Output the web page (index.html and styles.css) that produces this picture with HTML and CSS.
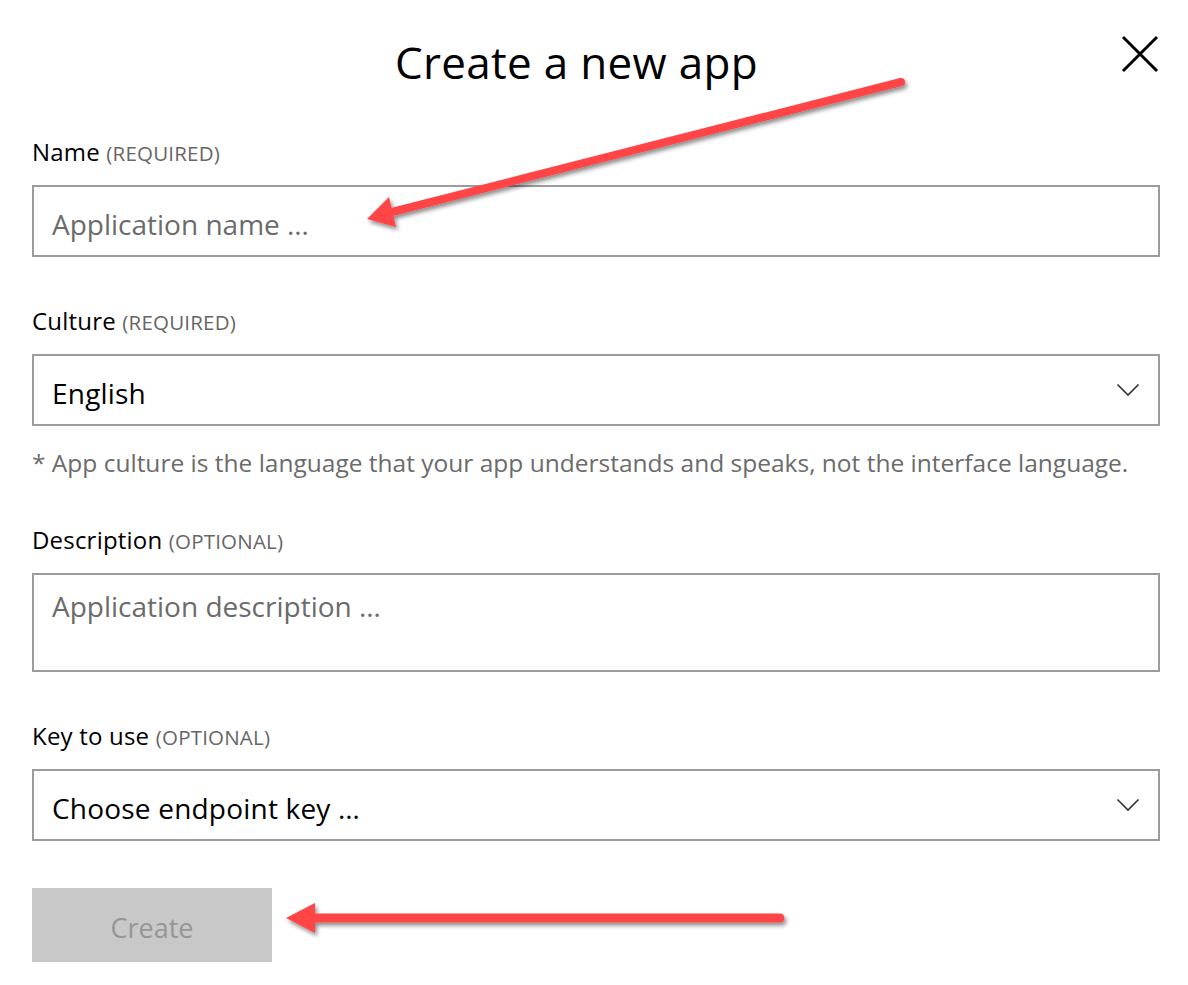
FILE: index.html
```html
<!DOCTYPE html>
<html lang="en">
<head>
<meta charset="utf-8">
<title>Create a new app</title>
<link rel="stylesheet" href="styles.css">
</head>
<body>
<div class="dialog">
  <div class="header">
    <h1 class="title">Create a new app</h1>
    <button class="close" aria-label="Close">
      <svg width="38" height="38" viewBox="0 0 38 38"><path d="M2 2 L36 36 M36 2 L2 36" stroke="#000" stroke-width="3" fill="none"/></svg>
    </button>
  </div>

  <div class="field">
    <label class="label">Name <span class="hint">(REQUIRED)</span></label>
    <div class="box input"><span class="placeholder">Application name …</span></div>
  </div>

  <div class="field">
    <label class="label">Culture <span class="hint">(REQUIRED)</span></label>
    <div class="box input select"><span class="value">English</span>
      <svg class="chev" width="24" height="14" viewBox="0 0 24 14"><path d="M1.5 1.5 L12 12 L22.5 1.5" stroke="#333" stroke-width="1.6" fill="none"/></svg>
    </div>
    <p class="note">* App culture is the language that your app understands and speaks, not the interface language.</p>
  </div>

  <div class="field">
    <label class="label">Description <span class="hint">(OPTIONAL)</span></label>
    <div class="box textarea"><span class="placeholder">Application description …</span></div>
  </div>

  <div class="field">
    <label class="label">Key to use <span class="hint">(OPTIONAL)</span></label>
    <div class="box input select"><span class="value">Choose endpoint key …</span>
      <svg class="chev" width="24" height="14" viewBox="0 0 24 14"><path d="M1.5 1.5 L12 12 L22.5 1.5" stroke="#333" stroke-width="1.6" fill="none"/></svg>
    </div>
  </div>

  <button class="create" disabled>Create</button>
</div>

<svg class="annotations" width="1188" height="985" viewBox="0 0 1188 985">
  <defs>
    <filter id="sh" x="-10%" y="-50%" width="120%" height="200%">
      <feDropShadow dx="2" dy="3" stdDeviation="2" flood-color="#000" flood-opacity="0.45"/>
    </filter>
  </defs>
  <g filter="url(#sh)" fill="#ff4444" stroke="#ff4444">
    <line x1="901" y1="82" x2="388" y2="213" stroke-width="8" stroke-linecap="round"/>
    <polygon points="367,219 389,197 396,227" stroke="none"/>
    <line x1="780" y1="918" x2="312" y2="918" stroke-width="9" stroke-linecap="round"/>
    <polygon points="286,918 315,903 315,933" stroke="none"/>
  </g>
</svg>
</body>
</html>
```
FILE: styles.css
```css
* { box-sizing: border-box; }
body {
  margin: 0;
  background: #fff;
  font-family: "Open Sans", "Noto Sans", sans-serif;
  color: #000;
  position: relative;
}
.dialog {
  padding: 0 28px 0 32px;
}
.header {
  display: flex;
  align-items: flex-start;
  height: 137px;
}
.title {
  flex: 1;
  margin: 36px 0 0;
  text-align: center;
  font-size: 44px;
  font-weight: 400;
  line-height: 53px;
  letter-spacing: 0.3px;
}
.close {
  margin: 35px 1px 0 0;
  padding: 0;
  width: 38px;
  height: 38px;
  border: 0;
  background: none;
  display: flex;
}
.field {
  display: flex;
  flex-direction: column;
}
.field + .field { margin-top: 49px; }
.label {
  font-size: 24px;
  line-height: 30px;
  height: 30px;
  margin-bottom: 18px;
  white-space: nowrap;
  letter-spacing: 0.2px;
}
.hint {
  font-size: 20.5px;
  color: #666;
}
.box {
  border: 2px solid #9c9c9c;
  padding: 0 18px;
  font-size: 28px;
}
.input {
  height: 72px;
  display: flex;
  align-items: center;
  padding-top: 5px;
}
.select { justify-content: space-between; padding-right: 18px; }
.select .chev { margin-top: -5px; }
.textarea {
  height: 99px;
  padding-top: 11px;
  line-height: 40px;
}
.placeholder { color: #6b6b6b; }
.value { color: #000; letter-spacing: 0.2px; }
.chev { display: block; }
.note {
  margin: 22px 0 0;
  font-size: 24.5px;
  line-height: 30px;
  color: #6b6b6b;
  white-space: nowrap;
}
.field:has(.note) + .field { margin-top: 47px; }
.create {
  margin-top: 47px;
  width: 240px;
  height: 74px;
  border: 0;
  background: #c8c8c8;
  color: #969696;
  font-family: inherit;
  font-size: 27px;
  padding: 4px 0 0;
}
.annotations {
  position: absolute;
  left: 0;
  top: 0;
  pointer-events: none;
}
```
